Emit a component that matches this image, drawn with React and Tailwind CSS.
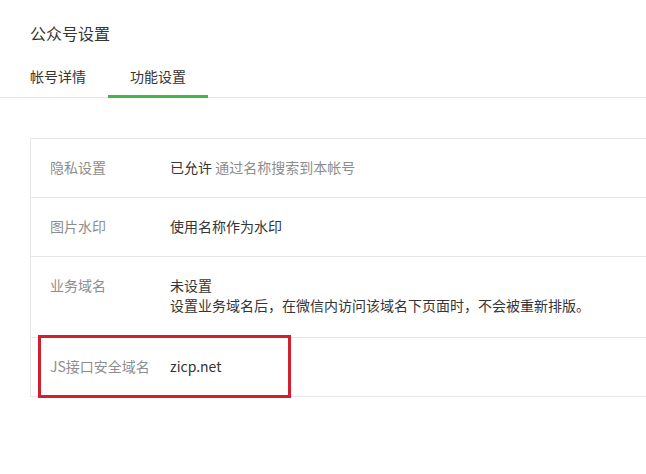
export default function App() {
  const font = { fontFamily: '"Noto Sans CJK SC", "Liberation Sans", sans-serif' };
  return (
    <div className="w-[646px] h-[474px] overflow-hidden bg-white text-[#353535]" style={font}>
      <h2 className="pl-[30px] pt-[21px] text-[16px] leading-[24px] font-normal">公众号设置</h2>

      {/* tabs */}
      <div className="mt-[21px] flex border-b border-[#e7e7eb] pl-[30px] text-[14px] leading-[20px]">
        <div className="pb-[10px]">帐号详情</div>
        <div className="ml-[22px] w-[100px] text-center pb-[9px] border-b-[3px] border-[#44b549] -mb-px">功能设置</div>
      </div>

      {/* settings table */}
      <div className="ml-[30px] mt-[40px] w-[700px] border-l border-t border-[#e7e7eb] text-[14px] leading-[20px]">
        <div className="flex pl-[19px] pt-[18px] pb-[20px] border-b border-[#e7e7eb]">
          <div className="w-[120px] text-[#8d8d8d]">隐私设置</div>
          <div>
            已允许 <span className="text-[#8d8d8d]">通过名称搜索到本帐号</span>
          </div>
        </div>
        <div className="flex pl-[19px] pt-[18px] pb-[20px] border-b border-[#e7e7eb]">
          <div className="w-[120px] text-[#8d8d8d]">图片水印</div>
          <div>使用名称作为水印</div>
        </div>
        <div className="flex pl-[19px] pt-[18px] pb-[22px] border-b border-[#e7e7eb]">
          <div className="w-[120px] text-[#8d8d8d]">业务域名</div>
          <div>
            <div>未设置</div>
            <div>设置业务域名后，在微信内访问该域名下页面时，不会被重新排版。</div>
          </div>
        </div>
        <div className="relative flex pl-[19px] pt-[18px] pb-[20px] border-b border-[#e7e7eb]">
          <div className="w-[120px] text-[#8d8d8d]">JS接口安全域名</div>
          <div>zicp.net</div>
          {/* highlight box */}
          <div className="absolute left-[7px] top-[-3px] w-[253px] h-[63px] border-[3px] border-[#d3202e]" />
        </div>
      </div>
    </div>
  );
}
